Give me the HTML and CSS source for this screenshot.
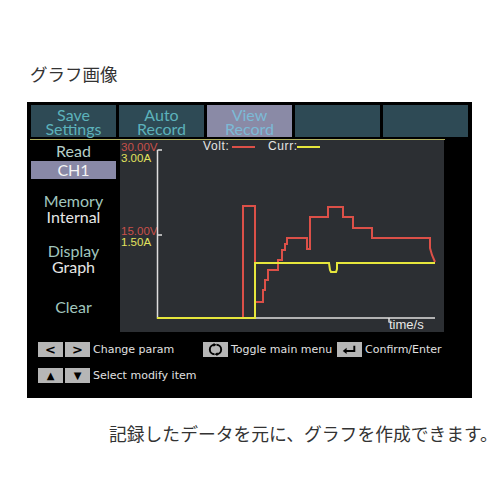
FILE: index.html
```html
<!DOCTYPE html>
<html>
<head>
<meta charset="utf-8">
<link rel="stylesheet" href="styles.css">
</head>
<body>
<h1 class="title">グラフ画像</h1>
<div class="screen">
  <div class="tabs">
    <div class="tab">Save<br>Settings</div>
    <div class="tab">Auto<br>Record</div>
    <div class="tab active">View<br>Record</div>
    <div class="tab"></div>
    <div class="tab"></div>
  </div>
  <div class="rule"></div>
  <div class="main">
    <div class="side">
      <div class="lbl read">Read</div>
      <div class="ch">CH1</div>
      <div class="grp mem"><div class="lbl">Memory</div><div class="val">Internal</div></div>
      <div class="grp disp"><div class="lbl">Display</div><div class="val">Graph</div></div>
      <div class="grp clr"><div class="lbl">Clear</div></div>
    </div>
    <svg class="graph" width="324" height="192" viewBox="0 0 324 192">
      <text x="1" y="11" class="t-v">30.00V</text>
      <text x="1" y="22" class="t-a">3.00A</text>
      <text x="1" y="95" class="t-v">15.00V</text>
      <text x="1" y="105.5" class="t-a">1.50A</text>
      <text x="83" y="9.5" class="t-l">Volt:</text>
      <line x1="112" y1="7" x2="135" y2="7" class="s-red"/>
      <text x="148" y="9.5" class="t-l">Curr:</text>
      <line x1="177" y1="7" x2="200" y2="7" class="s-yel"/>
      <path d="M37.5 10 H42 M37.5 95 H42 M269 178 V182.5" class="s-axis"/>
      <path d="M37.5 10 V178 H315" class="s-axis"/>
      <text x="269" y="188.5" class="t-time">time/s</text>
      <path d="M123 178 V66 H135 V162 H143 V150 H145 V140 H148 V130 H158 V120 H162 V110 H165 V104 H167 V98 H187 V109 H190 V77 H208 V67 H223 V77 H233 V88 H252 V98 H310 V108 L312 115 L315 122" class="s-red"/>
      <path d="M37 178 H135 V123 H209 L210 130 L211 132 H216 L217 129 L217 123 H315" class="s-yel"/>
    </svg>
  </div>
  <div class="help">
    <div class="row">
      <div class="item w1">
        <span class="key">&lt;</span><span class="key">&gt;</span><span class="txt">Change param</span>
      </div>
      <div class="item w2">
        <span class="key"><svg width="26" height="15" viewBox="0 0 26 15"><path d="M12 2.6 A4.9 4.9 0 0 0 12 12.4" class="ico"/><path d="M14 12.4 A4.9 4.9 0 0 0 14 2.6" class="ico"/><path d="M11 0.8 L14 2.6 L11 4.6 Z M15 10.4 L12 12.4 L15 14.2 Z" class="ico-fill"/></svg></span><span class="txt">Toggle main menu</span>
      </div>
      <div class="item">
        <span class="key"><svg width="26" height="15" viewBox="0 0 26 15"><path d="M18 3.5 V9 H9" class="ico"/><path d="M6 9 L10 5.8 L10 12.2 Z" class="ico-fill"/></svg></span><span class="txt">Confirm/Enter</span>
      </div>
    </div>
    <div class="row">
      <div class="item">
        <span class="key tri">&#9650;</span><span class="key tri">&#9660;</span><span class="txt">Select modify item</span>
      </div>
    </div>
  </div>
</div>
<p class="caption">記録したデータを元に、グラフを作成できます。</p>
</body>
</html>
```
FILE: styles.css
```css
* { box-sizing: border-box; }
html, body { margin: 0; padding: 0; background: #fff; }
body { width: 500px; height: 500px; overflow: hidden; font-family: "Noto Sans CJK JP", "Noto Sans", sans-serif; color: #333; }

.title {
  margin: 0;
  padding: 65px 0 0 30px;
  font-size: 17.5px;
  line-height: 18px;
  font-weight: 400;
  color: #333;
}

.screen {
  margin: 19px 0 0 27px;
  width: 445px;
  height: 296px;
  background: #000;
  display: flex;
  flex-direction: column;
}

.tabs {
  display: flex;
  gap: 3px;
  padding: 3px 4px 0 4px;
  height: 35px;
}
.tab {
  width: 85px;
  height: 32px;
  background: #2e4a55;
  color: #5cb2bb;
  font-family: Lato, "Open Sans", sans-serif;
  font-size: 16px;
  line-height: 14.5px;
  text-align: center;
  padding-top: 2.5px;
}
.tab.active { background: #8a8aa6; color: #7cbad6; }

.rule {
  margin: 1.5px 0 0 3px;
  width: 415px;
  height: 1.5px;
  background: #b0b060;
}

.main {
  display: flex;
  height: 192px;
}
.side {
  width: 93px;
  padding-top: 3px;
  font-family: Lato, "Open Sans", sans-serif;
  font-size: 16px;
  line-height: 16px;
  text-align: center;
}
.lbl { color: #a0c6be; }
.read { color: #b4cec7; }
.val { color: #e6e6e6; }
.ch {
  margin: 2px 4px 0 4px;
  height: 18px;
  line-height: 18px;
  background: #8888a6;
  color: #f4f4f4;
}
.mem { margin-top: 14px; }
.disp { margin-top: 18px; }
.clr { margin-top: 24px; }

.graph { display: block; background: #2c2f33; }
.t-v { font-family: "Liberation Sans", Arial, sans-serif; font-size: 11.5px; fill: #c8504a; }
.t-a { font-family: "Liberation Sans", Arial, sans-serif; font-size: 11.5px; fill: #e2e25e; }
.t-l { font-family: "Liberation Sans", Arial, sans-serif; font-size: 12px; fill: #e4e4e4; letter-spacing: 0.6px; }
.t-time { font-family: "Liberation Sans", Arial, sans-serif; font-size: 13px; fill: #e8e8e8; }
.s-red { fill: none; stroke: #dc5048; stroke-width: 2; }
.s-yel { fill: none; stroke: #e6e63c; stroke-width: 2; }
.s-axis { fill: none; stroke: #dedede; stroke-width: 1.5; }

.help {
  padding: 10px 0 0 11px;
  display: flex;
  flex-direction: column;
  gap: 11px;
  font-family: "DejaVu Sans", Verdana, sans-serif;
  font-size: 11px;
  color: #e0e0e0;
}
.row { display: flex; height: 15px; }
.item { display: flex; align-items: center; }
.w1 { width: 165px; }
.w2 { width: 134px; }
.key {
  width: 25px;
  height: 15px;
  background: #b6b6b6;
  color: #000;
  font-weight: bold;
  font-size: 13px;
  line-height: 15px;
  text-align: center;
  margin-right: 2px;
  display: flex;
  align-items: center;
  justify-content: center;
}
.key.tri { font-size: 10px; }
.key svg { display: block; }
.txt { margin-left: 1px; white-space: nowrap; }
.ico { fill: none; stroke: #000; stroke-width: 2; }
.ico-fill { fill: #000; }

.caption {
  margin: 26px 0 0 109px;
  font-size: 17.8px;
  line-height: 19px;
  color: #333;
  white-space: nowrap;
}
```
